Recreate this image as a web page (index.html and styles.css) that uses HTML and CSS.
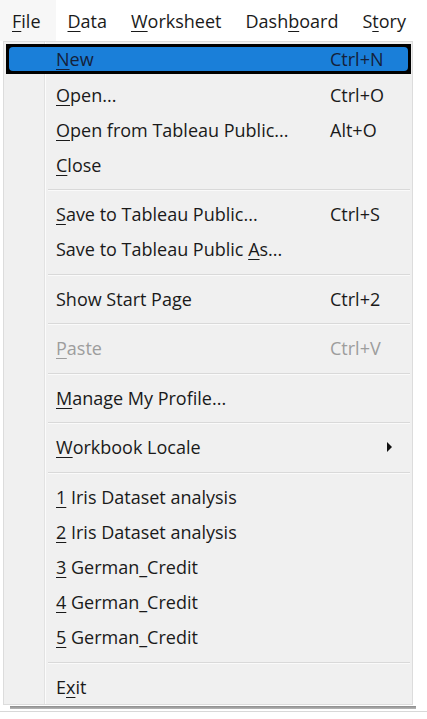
FILE: index.html
```html
<!DOCTYPE html>
<html lang="en">
<head>
<meta charset="utf-8">
<title>File menu</title>
<link rel="stylesheet" href="styles.css">
</head>
<body>
<div class="menubar">
  <span class="mb-item open"><u>F</u>ile</span>
  <span class="mb-item"><u>D</u>ata</span>
  <span class="mb-item"><u>W</u>orksheet</span>
  <span class="mb-item">Dash<u>b</u>oard</span>
  <span class="mb-item">S<u>t</u>ory</span>
</div>
<div class="menu">
  <div class="item active"><div class="hl"><span class="label"><u>N</u>ew</span><span class="key">Ctrl+N</span></div></div>
  <div class="item"><span class="label"><u>O</u>pen...</span><span class="key">Ctrl+O</span></div>
  <div class="item"><span class="label"><u>O</u>pen from Tableau Public...</span><span class="key">Alt+O</span></div>
  <div class="item"><span class="label"><u>C</u>lose</span></div>
  <div class="sep"></div>
  <div class="item"><span class="label"><u>S</u>ave to Tableau Public...</span><span class="key">Ctrl+S</span></div>
  <div class="item"><span class="label">Save to Tableau Public <u>A</u>s...</span></div>
  <div class="sep"></div>
  <div class="item"><span class="label">Show Start Page</span><span class="key">Ctrl+2</span></div>
  <div class="sep"></div>
  <div class="item disabled"><span class="label"><u>P</u>aste</span><span class="key">Ctrl+V</span></div>
  <div class="sep"></div>
  <div class="item"><span class="label"><u>M</u>anage My Profile...</span></div>
  <div class="sep"></div>
  <div class="item"><span class="label"><u>W</u>orkbook Locale</span><span class="arrow"></span></div>
  <div class="sep"></div>
  <div class="item"><span class="label"><u>1</u> Iris Dataset analysis</span></div>
  <div class="item"><span class="label"><u>2</u> Iris Dataset analysis</span></div>
  <div class="item"><span class="label"><u>3</u> German_Credit</span></div>
  <div class="item"><span class="label"><u>4</u> German_Credit</span></div>
  <div class="item"><span class="label"><u>5</u> German_Credit</span></div>
  <div class="sep"></div>
  <div class="item"><span class="label">E<u>x</u>it</span></div>
</div>
<div class="bottom-line"></div>
</body>
</html>
```

FILE: styles.css
```css
html, body {
  margin: 0;
  padding: 0;
  background: #ffffff;
}

body {
  font-family: "Open Sans", "Noto Sans", "Liberation Sans", sans-serif;
  font-size: 18px;
  color: #1a1a1a;
  width: 427px;
  height: 719px;
  overflow: hidden;
}

u {
  text-decoration-thickness: 1px;
  text-underline-offset: 3px;
}

.menubar {
  height: 41px;
  display: flex;
  align-items: center;
}

.mb-item {
  padding: 0 12px;
  height: 41px;
  display: flex;
  align-items: center;
  color: #1a1a1a;
}

.mb-item:first-child {
  padding-left: 12px;
  padding-right: 15px;
}

.mb-item.open {
  background: #f7f7f7;
}

.menu {
  position: relative;
  margin-left: 3px;
  width: 408px;
  background: #f0f0f0;
  border: 1px solid #dcdcdc;
  background-image: linear-gradient(to right, transparent 40px, #e2e2e2 40px, #e2e2e2 41px, #fbfbfb 41px, #fbfbfb 42px, transparent 42px);
}

.menu::after {
  content: "";
  position: absolute;
  left: 6px;
  right: -4px;
  bottom: -5px;
  height: 3px;
  background: linear-gradient(to bottom, #8a8a8a, #b8b8b8);
}

.item {
  height: 35px;
  display: grid;
  grid-template-columns: 52px 274px 1fr;
  align-items: center;
}

.item .label {
  grid-column: 2;
  white-space: nowrap;
}

.item .key {
  grid-column: 3;
  white-space: nowrap;
}

.item.active {
  display: block;
  height: 24px;
  margin: 2px 1px 3px 2px;
  border: 3px solid #000;
  background: #000;
}

.item.active .hl {
  height: 24px;
  display: grid;
  grid-template-columns: 47px 274px 1fr;
  align-items: center;
  background: #1a7fd9;
  border-radius: 4px;
  color: #14213a;
}

.item.disabled {
  color: #9d9d9d;
}

.arrow {
  grid-column: 3;
  justify-self: start;
  margin-left: 57px;
  width: 0;
  height: 0;
  border-top: 5px solid transparent;
  border-bottom: 5px solid transparent;
  border-left: 5px solid #111;
}

.sep {
  height: 14.6px;
  margin-left: 44px;
  margin-right: 2px;
  background: linear-gradient(to bottom, transparent 7px, #d9d9d9 7px, #d9d9d9 8px, #fafafa 8px, #fafafa 9px, transparent 9px);
}

.bottom-line {
  margin-top: 6px;
  height: 1px;
  background: #d8d8d8;
}
```
